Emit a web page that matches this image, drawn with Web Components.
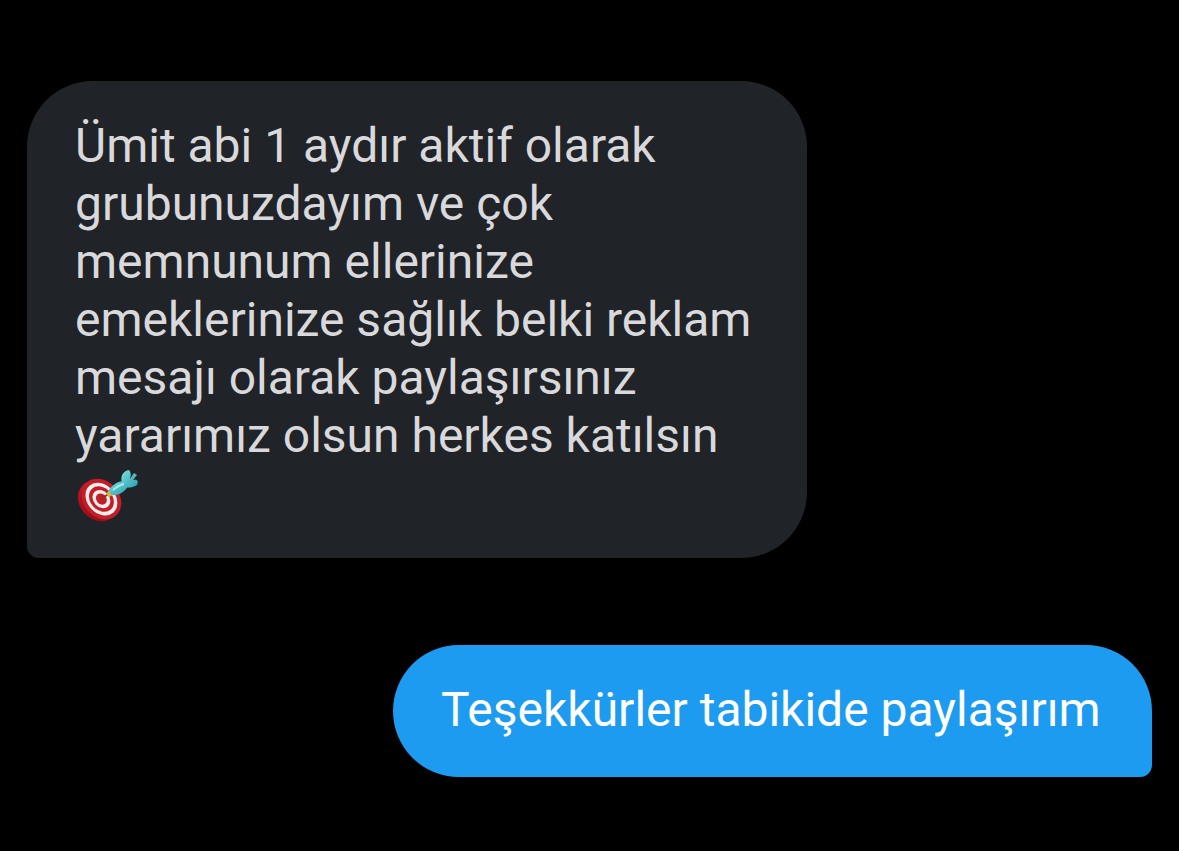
<!DOCTYPE html>
<html lang="tr">
<head>
<meta charset="utf-8">
<meta name="viewport" content="width=device-width, initial-scale=1">
<title>Mesajlar</title>
<style>
html { background: #000; }
body { margin: 0; background: #000; font-family: Roboto, sans-serif; font-size: 48px; line-height: 58px; }
</style>
</head>
<body>
<message-thread>
  <message-bubble kind="received">Ümit abi 1 aydır aktif olarak<br>grubunuzdayım ve çok<br>memnunum ellerinize<br>emeklerinize sağlık belki reklam<br>mesajı olarak paylaşırsınız<br>yararımız olsun herkes katılsın<dart-emoji></dart-emoji></message-bubble>
  <message-bubble kind="sent">Teşekkürler tabikide paylaşırım</message-bubble>
</message-thread>
<script>
class MessageThread extends HTMLElement {
  constructor() {
    super();
    this.attachShadow({ mode: "open" }).innerHTML = `
      <style>
        :host { display: block; }
        main { display: flex; flex-direction: column; gap: 87px; padding: 81px 27px 74px; }
      </style>
      <main><slot></slot></main>`;
  }
}
class MessageBubble extends HTMLElement {
  constructor() {
    super();
    this.attachShadow({ mode: "open" }).innerHTML = `
      <style>
        :host { display: block; box-sizing: border-box; max-width: 100%; padding: 36px 48px 38px; }
        :host([kind="received"]) { align-self: flex-start; width: 780px; background: #202327; color: #d9d9dc; border-radius: 66px 66px 66px 12px; }
        :host([kind="sent"]) { align-self: flex-end; width: 759px; background: #1d9bf0; color: #fff; border-radius: 66px 66px 12px 66px; }
        p { margin: 0; }
      </style>
      <p><slot></slot></p>`;
  }
}
class DartEmoji extends HTMLElement {
  constructor() {
    super();
    this.attachShadow({ mode: "open" }).innerHTML = `
      <style>
        :host { display: flex; align-items: center; height: 55px; }
        svg { display: block; width: 64px; height: 55px; overflow: visible; }
      </style>
      <svg viewBox="0 -4 64 55" role="img" aria-label="Hedef">
        <defs>
          <linearGradient id="rim" x1="0" y1="0" x2="1" y2="1"><stop offset="0" stop-color="#c9202a"/><stop offset="1" stop-color="#8f0a12"/></linearGradient>
          <linearGradient id="fin" x1="0" y1="0" x2="1" y2="1"><stop offset="0" stop-color="#7fdce2"/><stop offset="1" stop-color="#289fac"/></linearGradient>
        </defs>
        <g transform="translate(1 0) rotate(48 24 30)">
          <ellipse cx="24" cy="33" rx="22" ry="18" fill="url(#rim)"/>
          <ellipse cx="25" cy="29" rx="22" ry="18" fill="#c51d27"/>
          <ellipse cx="25" cy="29" rx="18" ry="14" fill="#f5eeea"/>
          <ellipse cx="25" cy="29" rx="14" ry="11" fill="#c51d27"/>
          <ellipse cx="25" cy="29" rx="10" ry="8" fill="#f5eeea"/>
          <ellipse cx="25" cy="29" rx="6" ry="5" fill="#c51d27"/>
        </g>
        <path d="M26 30 35 24" stroke="#783c26" stroke-width="2"/>
        <path d="M31 25 35 20 40 25 34 28Z" fill="#dfb32e"/>
        <path d="M33 22C37 16 43 12 49 12L53 17C50 23 43 27 37 26Z" fill="url(#fin)"/>
        <path d="M47 14C45 7 48 2 54 1Q57 4 55 10L59 4 62 6 58 11C62 10 64 12 62 16 57 19 53 19 49 18Z" fill="url(#fin)"/>
        <path d="M38 21Q44 16 49 15" stroke="#9ff0f0" stroke-width="2" fill="none"/>
      </svg>`;
  }
}
customElements.define("message-thread", MessageThread);
customElements.define("message-bubble", MessageBubble);
customElements.define("dart-emoji", DartEmoji);
</script>
</body>
</html>
